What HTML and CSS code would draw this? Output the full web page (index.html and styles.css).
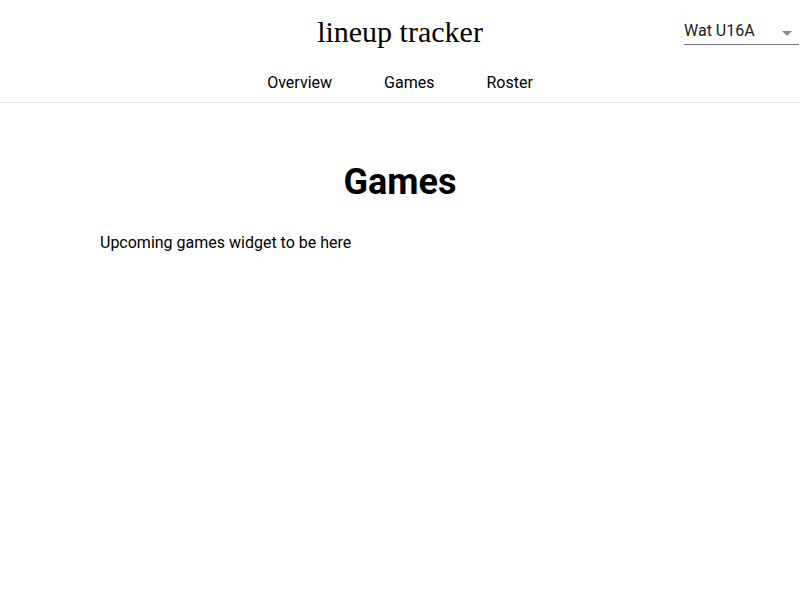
FILE: index.html
```html
<!DOCTYPE html>
<html>
<head>
<meta charset="utf-8">
<link rel="stylesheet" href="styles.css">
</head>
<body>
<header class="header">
  <div class="top-row">
    <div class="spacer"></div>
    <div class="brand">lineup tracker</div>
    <div class="team-cell">
      <div class="team-select">
        <span class="team-value">Wat U16A</span>
        <span class="arrow"></span>
      </div>
    </div>
  </div>
  <nav class="tabs">
    <a class="tab">Overview</a>
    <a class="tab">Games</a>
    <a class="tab">Roster</a>
  </nav>
</header>
<main class="main">
  <h1 class="page-title">Games</h1>
  <p class="content-text">Upcoming games widget to be here</p>
</main>
</body>
</html>
```
FILE: styles.css
```css
html, body {
  margin: 0;
  padding: 0;
  background: #fff;
}
body {
  font-family: Roboto, "Liberation Sans", sans-serif;
  color: #000;
}
.header {
  border-bottom: 1px solid #e8e8e8;
}
.top-row {
  display: grid;
  grid-template-columns: 1fr auto 1fr;
  align-items: start;
  height: 64px;
}
.brand {
  font-family: "Liberation Serif", "Times New Roman", serif;
  font-size: 30px;
  line-height: 34px;
  padding-top: 15px;
  color: #000;
}
.team-cell {
  display: flex;
  justify-content: flex-end;
  padding-top: 19px;
}
.team-select {
  width: 115px;
  margin-right: 1px;
  display: flex;
  align-items: center;
  justify-content: space-between;
  border-bottom: 1px solid #757575;
  height: 26px;
  box-sizing: border-box;
  padding-bottom: 1px;
}
.team-value {
  font-size: 16px;
  color: #212121;
  line-height: 20px;
}
.arrow {
  width: 0;
  height: 0;
  border-left: 5px solid transparent;
  border-right: 5px solid transparent;
  border-top: 5px solid #8a8a8a;
  margin-right: 7px;
  margin-top: 4px;
}
.tabs {
  display: flex;
  justify-content: center;
  gap: 52px;
  height: 36px;
  align-items: center;
  padding-bottom: 2px;
}
.tab {
  font-size: 16px;
  color: #000;
  text-decoration: none;
}
.main {
  padding: 0 100px;
}
.page-title {
  text-align: center;
  font-size: 36px;
  font-weight: 700;
  margin: 58px 0 0;
  line-height: 42px;
}
.content-text {
  font-size: 16px;
  margin: 30px 0 0;
  line-height: 20px;
}
```
